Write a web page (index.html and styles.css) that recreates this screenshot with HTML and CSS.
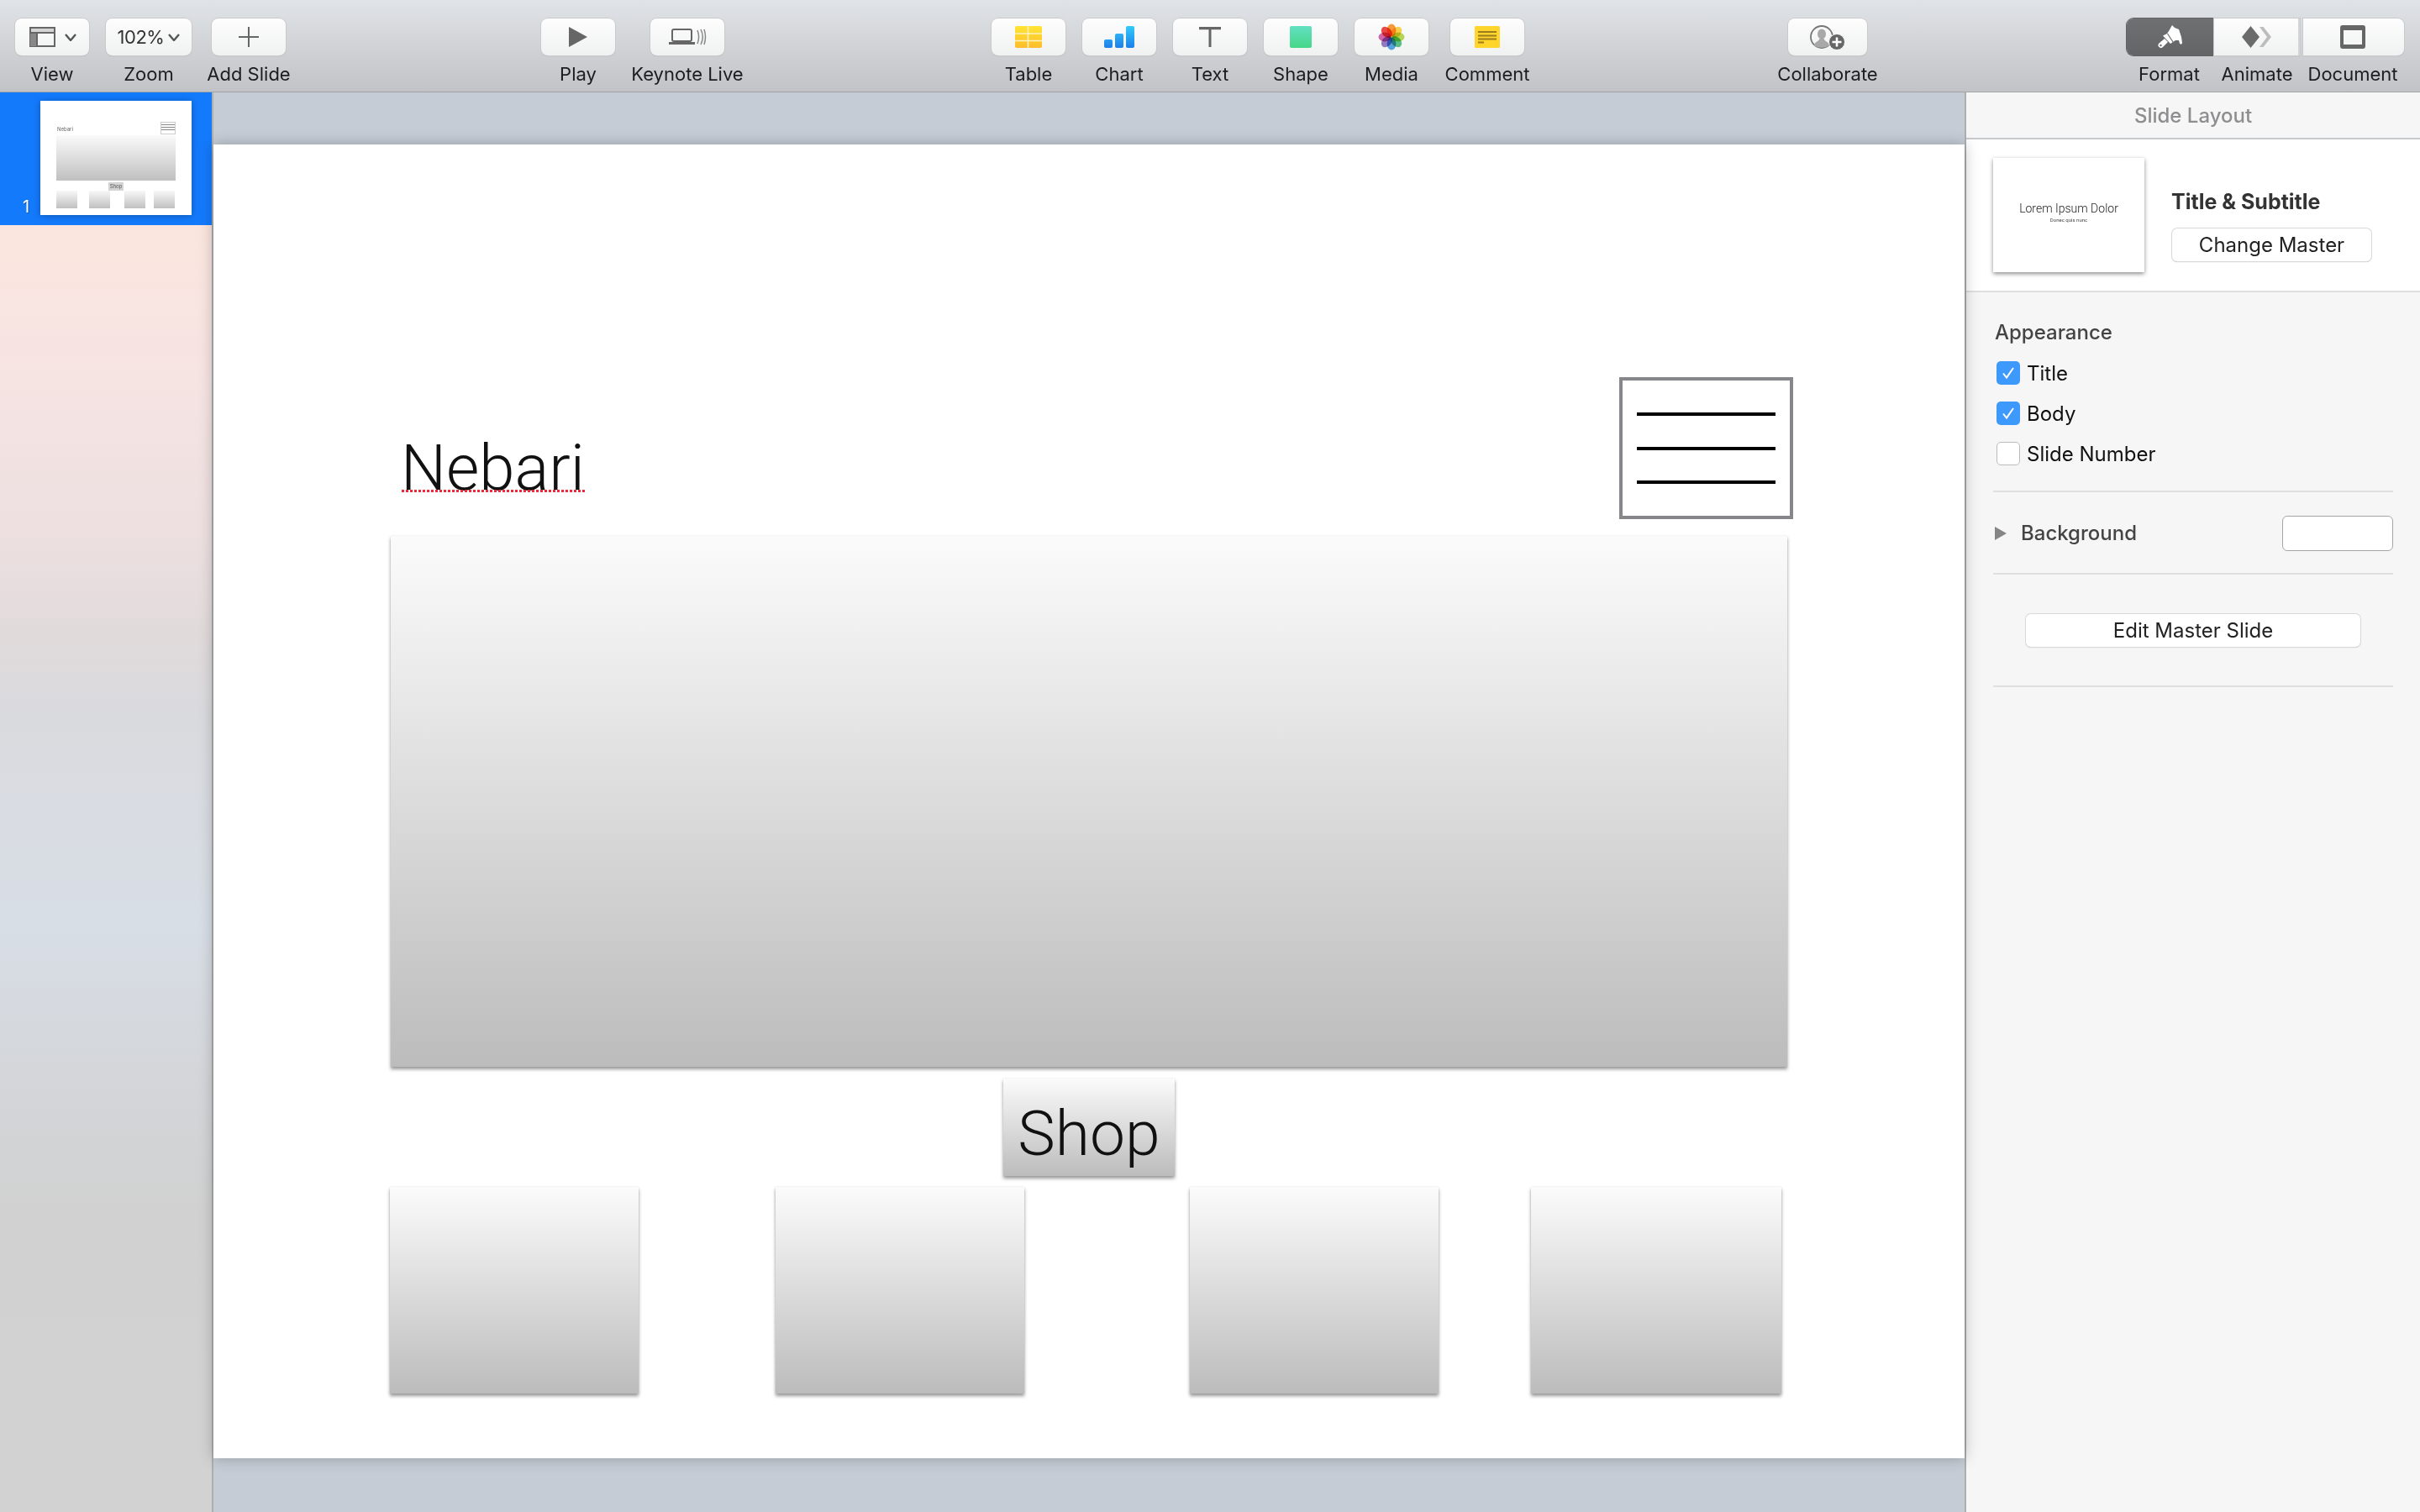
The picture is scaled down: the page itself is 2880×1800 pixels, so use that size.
FILE: index.html
```html
<!DOCTYPE html>
<html lang="en">
  <head>
    <meta charset="UTF-8" />
    <title>Keynote</title>
    <link rel="stylesheet" href="styles.css">
  </head>
  <body>
    <header class="toolbar">
      <div class="tool"><div class="tool-btn btn-view">
        <svg width="31" height="24" viewBox="0 0 31 24"><rect x="1" y="1" width="29" height="22" fill="none" stroke="#666" stroke-width="2"/><rect x="1" y="1" width="29" height="6" fill="#666" opacity=".25"/><rect x="1" y="7" width="8" height="16" fill="#888"/><path d="M1 7h29M9 7v16" stroke="#666" stroke-width="2"/></svg>
        <svg class="chev" width="14" height="9" viewBox="0 0 14 9"><path d="M1 1l6 7 6-7" fill="none" stroke="#555" stroke-width="2.400"/></svg>
      </div><span class="tool-label">View</span></div>

      <div class="tool"><div class="tool-btn btn-zoom">
        <span class="zoom-val">102%</span>
        <svg class="chev" width="14" height="9" viewBox="0 0 14 9"><path d="M1 1l6 7 6-7" fill="none" stroke="#555" stroke-width="2.400"/></svg>
      </div><span class="tool-label">Zoom</span></div>

      <div class="tool"><div class="tool-btn">
        <svg width="24" height="24" viewBox="0 0 24 24"><path d="M12 0v24M0 12h24" stroke="#666" stroke-width="2"/></svg>
      </div><span class="tool-label">Add Slide</span></div>

      <div class="tool group-play"><div class="tool-btn">
        <svg width="22" height="24" viewBox="0 0 22 24"><path d="M0 0l22 12L0 24z" fill="#666"/></svg>
      </div><span class="tool-label">Play</span></div>

      <div class="tool group-live"><div class="tool-btn">
        <svg width="46" height="20" viewBox="0 0 46 20"><rect x="5" y="1" width="23" height="14" rx="2" fill="none" stroke="#666" stroke-width="2"/><rect x="1" y="16" width="31" height="3" fill="#666"/><path d="M35 2c2 5 2 11 0 16M39 1c3 6 3 12 0 18M43 1c2 6 2 12 0 18" fill="none" stroke="#888" stroke-width="1.500"/></svg>
      </div><span class="tool-label">Keynote Live</span></div>

      <div class="tool group-insert"><div class="tool-btn">
        <svg width="32" height="26" viewBox="0 0 32 26"><defs><linearGradient id="tableFill" x1="0" y1="0" x2="0" y2="1"><stop offset="0" stop-color="#ffe534"/><stop offset="1" stop-color="#fdbc2b"/></linearGradient></defs><rect width="32" height="26" rx="2" fill="url(#tableFill)"/><path d="M15.500 0v26M0 9h32M0 17.500h32" stroke="#fff1c0" stroke-width="1.600"/></svg>
      </div><span class="tool-label">Table</span></div>

      <div class="tool"><div class="tool-btn">
        <svg width="36" height="26" viewBox="0 0 36 26"><defs><linearGradient id="barFill" x1="0" y1="0" x2="0" y2="26" gradientUnits="userSpaceOnUse"><stop offset="0" stop-color="#33cbfb"/><stop offset="1" stop-color="#1d7fe8"/></linearGradient></defs><rect y="16" width="10" height="10" rx="2" fill="url(#barFill)"/><rect x="13" y="9" width="10" height="17" rx="2" fill="url(#barFill)"/><rect x="26" width="10" height="26" rx="2" fill="url(#barFill)"/></svg>
      </div><span class="tool-label">Chart</span></div>

      <div class="tool"><div class="tool-btn">
        <svg width="26" height="24" viewBox="0 0 26 24"><path d="M0 0h26v3.200H14.500V24h-3V3.200H0z" fill="#666"/></svg>
      </div><span class="tool-label">Text</span></div>

      <div class="tool"><div class="tool-btn">
        <div class="shape-icon"></div>
      </div><span class="tool-label">Shape</span></div>

      <div class="tool"><div class="tool-btn">
        <svg class="petals" width="32" height="32" viewBox="-16 -16 32 32">
          <ellipse cx="0" cy="-8" rx="5.400" ry="7.500" fill="#fb9d3a"/>
          <ellipse cx="0" cy="-8" rx="5.400" ry="7.500" fill="#fed34b" transform="rotate(45)"/>
          <ellipse cx="0" cy="-8" rx="5.400" ry="7.500" fill="#bcdb55" transform="rotate(90)"/>
          <ellipse cx="0" cy="-8" rx="5.400" ry="7.500" fill="#5fc48c" transform="rotate(135)"/>
          <ellipse cx="0" cy="-8" rx="5.400" ry="7.500" fill="#5aa8e8" transform="rotate(180)"/>
          <ellipse cx="0" cy="-8" rx="5.400" ry="7.500" fill="#9a7fc8" transform="rotate(225)"/>
          <ellipse cx="0" cy="-8" rx="5.400" ry="7.500" fill="#d768ae" transform="rotate(270)"/>
          <ellipse cx="0" cy="-8" rx="5.400" ry="7.500" fill="#f04a45" transform="rotate(315)"/>
        </svg>
      </div><span class="tool-label">Media</span></div>

      <div class="tool group-comment"><div class="tool-btn">
        <svg width="30" height="26" viewBox="0 0 30 26"><rect width="30" height="26" rx="1.500" fill="#ffd42b"/><path d="M4 7h22M4 11.500h22M4 15.500h22M4 19.500h7" stroke="#9c7c20" stroke-width="2"/></svg>
      </div><span class="tool-label">Comment</span></div>

      <div class="tool tool-wide group-collab"><div class="tool-btn">
        <svg width="42" height="30" viewBox="0 0 42 30"><circle cx="14" cy="15" r="13" fill="none" stroke="#777" stroke-width="1.800"/><ellipse cx="14" cy="11.500" rx="5" ry="6" fill="#a8a8a8"/><path d="M5 25c0-4 5-4 6.500-8h5c1.500 4 6.500 4 6.500 8-4 3.500-14 3.500-18 0z" fill="#a8a8a8"/><circle cx="32" cy="21" r="9.500" fill="#666" stroke="#f5f5f5" stroke-width="1"/><path d="M32 15.500v11M26.500 21h11" stroke="#fff" stroke-width="2.600"/></svg>
      </div><span class="tool-label">Collaborate</span></div>

      <div class="seg-group">
        <div class="tool seg-format"><div class="tool-btn seg-first">
          <svg width="30" height="28" viewBox="0 0 30 28"><path d="M6 12.500l5-2.500 2-3L17 0l3 3 5 2 3 9 1 7a1.600 1.600 0 0 1-3.200 0L25 18l-4 0-6 4z" fill="#fff"/><path d="M11.500 10l6.500 10" stroke="#6a6b6d" stroke-width="1.200"/><path d="M8 16l4 4-6 6a2.800 2.800 0 0 1-4.500-4.500z" fill="#fff"/><circle cx="3.500" cy="24" r="1.200" fill="#6a6b6d"/></svg>
        </div><span class="tool-label">Format</span></div>
        <div class="tool seg-animate"><div class="tool-btn seg-mid">
          <svg width="35" height="26" viewBox="0 0 35 26"><path d="M21 1h4.500L35 13l-9.500 12H21l9-12z" fill="#bdbdbd"/><path d="M10.500 0L21 13 10.500 26 0 13z" fill="#6b6b6b"/></svg>
        </div><span class="tool-label">Animate</span></div>
        <div class="tool seg-document"><div class="tool-btn seg-last">
          <div class="doc-icon"></div>
        </div><span class="tool-label">Document</span></div>
      </div>
    </header>

    <main class="workspace">
      <aside class="sidebar">
        <div class="slide-row">
          <span class="slide-num">1</span>
          <div class="thumb">
            <span class="t-title">Nebari</span>
            <div class="t-menu"></div>
            <div class="t-hero"></div>
            <span class="t-shop">Shop</span>
            <div class="t-card t-c1"></div>
            <div class="t-card t-c2"></div>
            <div class="t-card t-c3"></div>
            <div class="t-card t-c4"></div>
          </div>
        </div>
      </aside>

      <section class="canvas">
        <div class="slide">
          <div class="s-title">Nebari</div>
          <div class="s-menu"><i></i><i></i><i></i></div>
          <div class="s-box s-hero"></div>
          <div class="s-box s-shop">Shop</div>
          <div class="s-box s-card s-c1"></div>
          <div class="s-box s-card s-c2"></div>
          <div class="s-box s-card s-c3"></div>
          <div class="s-box s-card s-c4"></div>
        </div>
      </section>

      <aside class="panel">
        <div class="panel-head">Slide Layout</div>
        <div class="master">
          <div class="master-thumb">
            <span class="mt-title">Lorem Ipsum Dolor</span>
            <span class="mt-sub">Donec quis nunc</span>
          </div>
          <div class="master-info">
            <div class="master-name">Title &amp; Subtitle</div>
            <div class="push-btn btn-change">Change Master</div>
          </div>
        </div>
        <div class="panel-body">
          <div class="section section-appearance">
            <div class="section-title">Appearance</div>
            <div class="check-row"><span class="check on"><svg width="16" height="16" viewBox="0 0 16 16"><path d="M2 8.500l4 5L14 2" fill="none" stroke="#fff" stroke-width="2"/></svg></span>Title</div>
            <div class="check-row"><span class="check on"><svg width="16" height="16" viewBox="0 0 16 16"><path d="M2 8.500l4 5L14 2" fill="none" stroke="#fff" stroke-width="2"/></svg></span>Body</div>
            <div class="check-row"><span class="check"></span>Slide Number</div>
          </div>
          <div class="section section-bg">
            <span class="disclosure"></span>
            <span class="section-title">Background</span>
            <div class="color-well"></div>
          </div>
          <div class="section section-edit">
            <div class="push-btn btn-edit">Edit Master Slide</div>
          </div>
        </div>
      </aside>
    </main>
  </body>
</html>
```

FILE: styles.css
```css
* {
  box-sizing: border-box;
}
html,
body {
  margin: 0;
  height: 100%;
}
body {
  width: 2880px;
  height: 1800px;
  overflow: hidden;
  display: flex;
  flex-direction: column;
  font-family: Inter, "Noto Sans", sans-serif;
  color: #222;
  background-color: #c5ccd5;
}

/* toolbar */
.toolbar {
  height: 110px;
  flex: none;
  display: flex;
  padding: 22px 22px 0 18px;
  gap: 20px;
  background: linear-gradient(#e0e3e7, #c1c3c6);
  border-bottom: 1px solid #a3a4a6;
}
.tool {
  width: 88px;
  display: flex;
  flex-direction: column;
  align-items: center;
  flex: none;
}
.tool:nth-child(2) {
  width: 102px;
}
.tool:nth-child(3) {
  margin-left: 4px;
}
.tool-btn {
  width: 100%;
  height: 44px;
  display: flex;
  align-items: center;
  justify-content: center;
  background: linear-gradient(#fdfdfd, #f0f1f1);
  border-radius: 8px;
  box-shadow: 0 0 0 1px #c9cacc, 0 1px 1px #a9abad;
}
.tool-label {
  margin-top: 9px;
  font-size: 22px;
  line-height: 26px;
  white-space: nowrap;
  color: #1d1d1f;
}
.tool-wide {
  width: 94px;
}
.group-play {
  margin-left: 284px;
}
.group-live {
  margin-left: 22px;
}
.group-insert {
  margin-left: 298px;
}
.group-comment {
  margin-left: 6px;
}
.group-collab {
  margin-left: 294px;
}
.btn-view {
  gap: 11px;
  padding-left: 1px;
}
.btn-zoom {
  gap: 5px;
}
.zoom-val {
  font-size: 22px;
  letter-spacing: -0.5px;
  color: #333;
}
.shape-icon {
  width: 26px;
  height: 26px;
  border-radius: 2px;
  background: linear-gradient(#63e0c2, #46d688);
}
.petals ellipse {
  mix-blend-mode: multiply;
}
.doc-icon {
  width: 30px;
  height: 28px;
  border-style: solid;
  border-color: #666;
  border-width: 6px 4px 5px;
  border-radius: 3px;
}

/* format / animate / document */
.seg-group {
  margin-left: 289px;
  display: flex;
}
.seg-format {
  width: 104px;
}
.seg-animate {
  width: 103px;
}
.seg-document {
  width: 120px;
}
.seg-format .tool-label {
  margin-left: -3px;
}
.seg-document .tool-label {
  margin-left: -2px;
}
.seg-first {
  border-radius: 8px 0 0 8px;
  background: linear-gradient(#6f7072, #636466);
  box-shadow: 0 0 0 1px #626365;
}
.seg-mid {
  border-radius: 0;
  border-right: 2px solid #d4d5d6;
}
.seg-last {
  border-radius: 0 8px 8px 0;
}
.seg-last .doc-icon {
  margin-left: -3px;
}

/* main area */
.workspace {
  flex: 1;
  display: flex;
  min-height: 0;
}
.sidebar {
  width: 254px;
  flex: none;
  border-right: 2px solid #adaeb0;
  background: linear-gradient(#fbe5de 9.3%, #f6e4e3 20%, #ecdfe0 32%, #e0dadb 38.5%, #d9dade 44%, #d8dee6 58.6%, #d3d5d8 70.4%, #d1d1d1 79%, #d2d2d2 100%);
}
.slide-row {
  height: 158px;
  padding: 10px 0 0 48px;
  background-color: #147afc;
  position: relative;
}
.slide-num {
  position: absolute;
  left: 27px;
  top: 124px;
  font-size: 20px;
  line-height: 24px;
  color: #fff;
  text-shadow: 1px 1px 0 #0b54b0;
}

/* mini slide in the navigator */
.thumb {
  position: relative;
  width: 180px;
  height: 136px;
  background-color: #fff;
  box-shadow: 0 1px 8px rgba(0, 0, 0, 0.3);
}
.t-title {
  position: absolute;
  left: 20px;
  top: 30px;
  font-size: 6px;
  line-height: 8px;
  color: #666;
}
.t-menu {
  position: absolute;
  left: 143px;
  top: 25px;
  width: 18px;
  height: 15px;
  border: 1px solid #ccc;
  background: linear-gradient(#fff 2px, #888 2px, #888 3px, #fff 3px, #fff 5px, #888 5px, #888 6px, #fff 6px, #fff 8px, #888 8px, #888 9px, #fff 9px);
}
.t-hero {
  position: absolute;
  left: 19px;
  top: 41px;
  width: 142px;
  height: 54px;
  background: linear-gradient(#fafafa, #c0c0c0);
}
.t-shop {
  position: absolute;
  left: 81px;
  top: 97px;
  width: 18px;
  height: 10px;
  font-size: 6px;
  line-height: 10px;
  text-align: center;
  color: #555;
  background-color: #d4d4d4;
}
.t-card {
  position: absolute;
  top: 107px;
  width: 25px;
  height: 21px;
  background: linear-gradient(#f8f8f8, #c0c0c0);
}
.t-c1 {
  left: 19px;
}
.t-c2 {
  left: 58px;
}
.t-c3 {
  left: 100px;
}
.t-c4 {
  left: 135px;
}

/* slide canvas */
.canvas {
  flex: 1;
  padding-top: 62px;
  min-width: 0;
  background-color: #c5ccd5;
}
.slide {
  position: relative;
  height: 1564px;
  background-color: #fff;
  box-shadow: 0 0 16px rgba(0, 0, 0, 0.25);
}
.s-title {
  position: absolute;
  left: 223px;
  top: 340px;
  font-family: Roboto, sans-serif;
  font-weight: 300;
  font-size: 76px;
  line-height: 90px;
  color: #111;
}
.s-title::after {
  content: "";
  position: absolute;
  left: 1px;
  right: 0;
  top: 71px;
  height: 3px;
  background: repeating-linear-gradient(90deg, #f0283c 0 3px, transparent 3px 5px);
}
.s-menu {
  position: absolute;
  left: 1673px;
  top: 277px;
  width: 207px;
  height: 169px;
  padding: 38px 17px;
  display: flex;
  flex-direction: column;
  justify-content: space-between;
  border: 4px solid #85878a;
}
.s-menu i {
  display: block;
  height: 4px;
  background-color: #000;
}
.s-box {
  position: absolute;
  background: linear-gradient(#fbfbfb, #bcbcbc);
  box-shadow: 0 3px 4px rgba(0, 0, 0, 0.4), 0 0 2px rgba(0, 0, 0, 0.08);
}
.s-hero {
  left: 211px;
  top: 466px;
  width: 1662px;
  height: 632px;
}
.s-shop {
  left: 940px;
  top: 1112px;
  width: 204px;
  height: 116px;
  font-family: Roboto, sans-serif;
  font-weight: 300;
  font-size: 75px;
  line-height: 130px;
  text-align: center;
  color: #111;
}
.s-card {
  top: 1241px;
  height: 246px;
  width: 296px;
}
.s-c1 {
  left: 210px;
}
.s-c2 {
  left: 669px;
}
.s-c3 {
  left: 1162px;
}
.s-c4 {
  left: 1568px;
  width: 298px;
}

/* right panel */
.panel {
  width: 542px;
  flex: none;
  display: flex;
  flex-direction: column;
  border-left: 2px solid #adaeb0;
  background-color: #f6f6f6;
}
.panel-head {
  height: 56px;
  text-align: center;
  font-size: 24px;
  font-weight: 500;
  line-height: 56px;
  color: #8e8e90;
  border-bottom: 2px solid #c6cacd;
}
.master {
  height: 182px;
  padding: 22px 0 0 32px;
  display: flex;
  background-color: #fff;
  border-bottom: 2px solid #dfdfdf;
}
.master-thumb {
  width: 180px;
  height: 136px;
  padding-bottom: 6px;
  display: flex;
  flex-direction: column;
  align-items: center;
  justify-content: center;
  background-color: #fff;
  box-shadow: 0 2px 5px rgba(0, 0, 0, 0.45);
}
.mt-title {
  font-family: Roboto, sans-serif;
  font-weight: 300;
  font-size: 14px;
  line-height: 18px;
  color: #222;
}
.mt-sub {
  font-family: Roboto, sans-serif;
  font-size: 6px;
  line-height: 10px;
  color: #444;
}
.master-info {
  margin-left: 32px;
  padding-top: 37px;
}
.master-name {
  font-size: 25px;
  font-weight: 700;
  line-height: 30px;
  color: #333;
}
.push-btn {
  text-align: center;
  font-size: 24px;
  background-color: #fff;
  border-radius: 6px;
  box-shadow: 0 0 0 1px #d8d8d8, 0 1px 1px #b5b5b5;
  color: #222;
}
.btn-change {
  width: 237px;
  height: 39px;
  margin-top: 17px;
  margin-left: 1px;
  line-height: 39px;
}
.panel-body {
  padding: 0 32px;
}
.section {
  border-bottom: 2px solid #dfdfdf;
}
.section-title {
  font-size: 24px;
  font-weight: 500;
  line-height: 30px;
  color: #444;
}
.section-appearance {
  height: 238px;
  padding-top: 33px;
}
.section-appearance .section-title {
  margin-left: 2px;
}
.check-row {
  display: flex;
  align-items: center;
  gap: 8px;
  height: 28px;
  margin-top: 20px;
  margin-left: 4px;
  font-size: 24px;
  color: #111;
}
.section-appearance .section-title + .check-row {
  margin-top: 19px;
}
.check {
  width: 28px;
  height: 28px;
  display: flex;
  align-items: center;
  justify-content: center;
  border-radius: 5px;
  background-color: #fff;
  border: 1px solid #bbb;
}
.check.on {
  background-color: #3d99fb;
  border: 0;
}
.section-bg {
  height: 98px;
  padding-top: 2px;
  display: flex;
  align-items: center;
}
.disclosure {
  width: 0;
  height: 0;
  margin-left: 2px;
  margin-right: 17px;
  border-left: 14px solid #858585;
  border-top: 8px solid transparent;
  border-bottom: 8px solid transparent;
}
.color-well {
  width: 132px;
  height: 42px;
  margin-left: auto;
  background-color: #fff;
  border: 1px solid #a5a5a5;
  border-radius: 6px;
}
.section-edit {
  height: 134px;
  padding-top: 47px;
}
.btn-edit {
  width: 398px;
  height: 39px;
  margin-left: 39px;
  line-height: 39px;
}
```
